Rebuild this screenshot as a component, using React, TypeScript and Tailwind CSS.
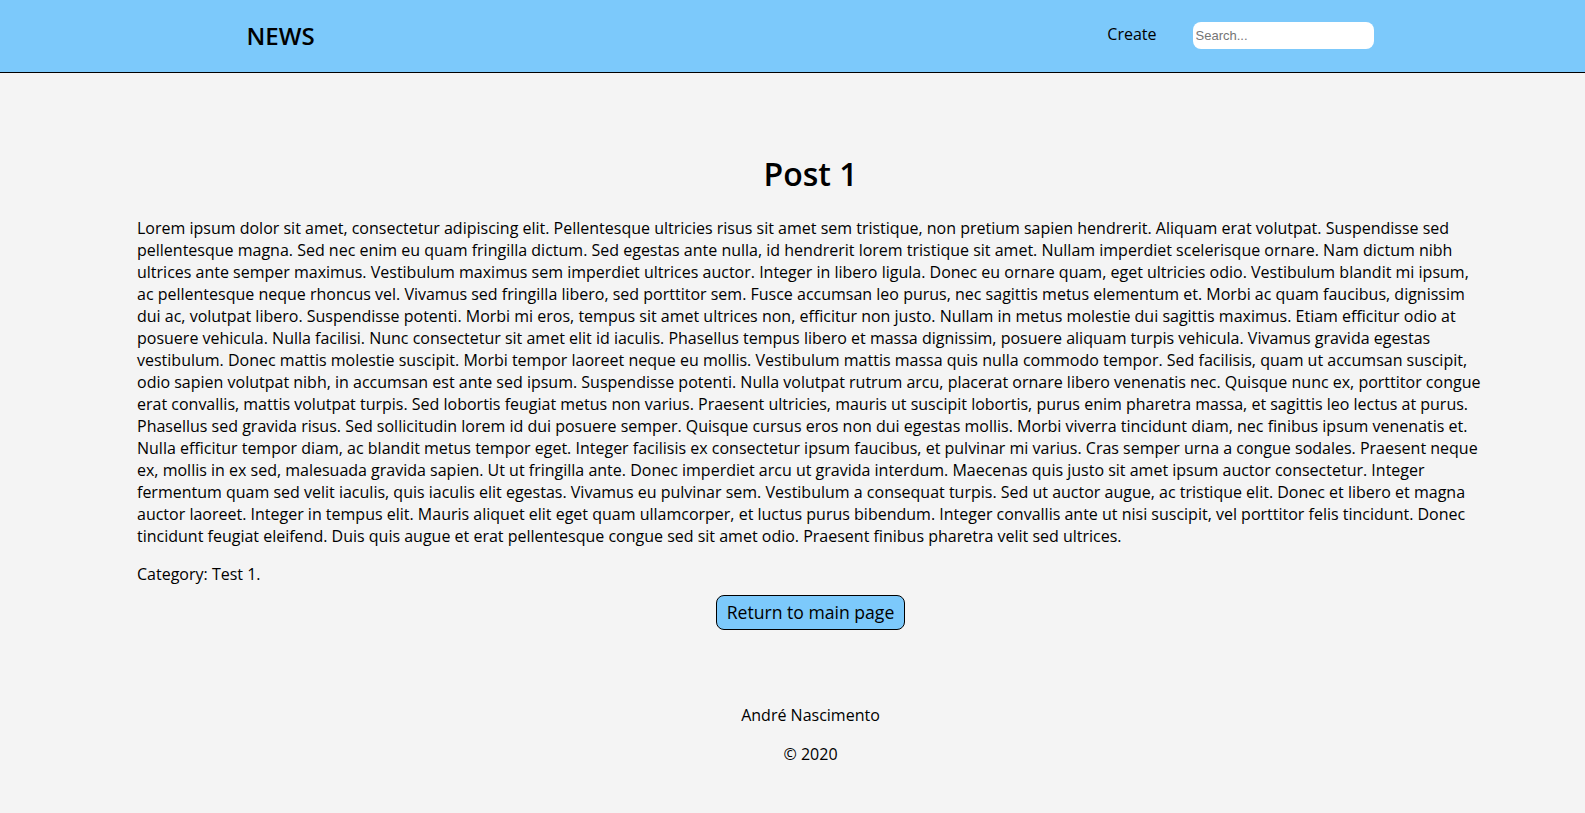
import React from 'react'

const body =
  'Lorem ipsum dolor sit amet, consectetur adipiscing elit. Pellentesque ultricies risus sit amet sem tristique, non pretium sapien hendrerit. Aliquam erat volutpat. Suspendisse sed pellentesque magna. Sed nec enim eu quam fringilla dictum. Sed egestas ante nulla, id hendrerit lorem tristique sit amet. Nullam imperdiet scelerisque ornare. Nam dictum nibh ultrices ante semper maximus. Vestibulum maximus sem imperdiet ultrices auctor. Integer in libero ligula. Donec eu ornare quam, eget ultricies odio. Vestibulum blandit mi ipsum, ac pellentesque neque rhoncus vel. Vivamus sed fringilla libero, sed porttitor sem. Fusce accumsan leo purus, nec sagittis metus elementum et. Morbi ac quam faucibus, dignissim dui ac, volutpat libero. Suspendisse potenti. Morbi mi eros, tempus sit amet ultrices non, efficitur non justo. Nullam in metus molestie dui sagittis maximus. Etiam efficitur odio at posuere vehicula. Nulla facilisi. Nunc consectetur sit amet elit id iaculis. Phasellus tempus libero et massa dignissim, posuere aliquam turpis vehicula. Vivamus gravida egestas vestibulum. Donec mattis molestie suscipit. Morbi tempor laoreet neque eu mollis. Vestibulum mattis massa quis nulla commodo tempor. Sed facilisis, quam ut accumsan suscipit, odio sapien volutpat nibh, in accumsan est ante sed ipsum. Suspendisse potenti. Nulla volutpat rutrum arcu, placerat ornare libero venenatis nec. Quisque nunc ex, porttitor congue erat convallis, mattis volutpat turpis. Sed lobortis feugiat metus non varius. Praesent ultricies, mauris ut suscipit lobortis, purus enim pharetra massa, et sagittis leo lectus at purus. Phasellus sed gravida risus. Sed sollicitudin lorem id dui posuere semper. Quisque cursus eros non dui egestas mollis. Morbi viverra tincidunt diam, nec finibus ipsum venenatis et. Nulla efficitur tempor diam, ac blandit metus tempor eget. Integer facilisis ex consectetur ipsum faucibus, et pulvinar mi varius. Cras semper urna a congue sodales. Praesent neque ex, mollis in ex sed, malesuada gravida sapien. Ut ut fringilla ante. Donec imperdiet arcu ut gravida interdum. Maecenas quis justo sit amet ipsum auctor consectetur. Integer fermentum quam sed velit iaculis, quis iaculis elit egestas. Vivamus eu pulvinar sem. Vestibulum a consequat turpis. Sed ut auctor augue, ac tristique elit. Donec et libero et magna auctor laoreet. Integer in tempus elit. Mauris aliquet elit eget quam ullamcorper, et luctus purus bibendum. Integer convallis ante ut nisi suscipit, vel porttitor felis tincidunt. Donec tincidunt feugiat eleifend. Duis quis augue et erat pellentesque congue sed sit amet odio. Praesent finibus pharetra velit sed ultrices.'

function Header() {
  return (
    <header className="h-[73px] bg-[#7cc9fb] border-b border-black pl-[35px]">
      <div className="mx-auto w-[1127px] h-full flex items-center justify-between">
        <h1 className="text-[24px] font-semibold text-black -mt-[1px]">NEWS</h1>
        <nav className="flex items-center gap-[36px]">
          <a className="text-[16px] text-black cursor-pointer -mt-[4px]">Create</a>
          <input
            type="text"
            placeholder="Search..."
            className="w-[181px] h-[27px] -mt-[2px] bg-white rounded-[8px] px-[3px] text-[13px] outline-none placeholder:text-[#757575]"
            style={{ fontFamily: '"Liberation Sans", Arial, sans-serif' }}
          />
        </nav>
      </div>
    </header>
  )
}

export default function App() {
  return (
    <div
      className="min-h-[813px] bg-[#f4f4f4] text-black"
      style={{ fontFamily: '"Open Sans", sans-serif' }}
    >
      <Header />
      <main className="pl-[36px] pt-[78px]">
        <div className="mx-auto w-[1347px] flex flex-col">
          <h2 className="text-[32px] font-semibold text-center leading-[46px] mb-[20px]">Post 1</h2>
          <p className="text-[16px] leading-[22px]">{body}</p>
          <p className="text-[16px] leading-[22px] mt-[16px]">Category: Test 1.</p>
          <div className="flex justify-center mt-[10px]">
            <button className="bg-[#7cc9fb] border border-black rounded-[8px] px-[10px] py-[4px] text-[17.6px] leading-[25px]">
              Return to main page
            </button>
          </div>
        </div>
        <footer className="flex flex-col items-center pt-[74px] pb-[50px] text-[16px] leading-[22px] gap-[17px]">
          <p>André Nascimento</p>
          <p>© 2020</p>
        </footer>
      </main>
    </div>
  )
}
